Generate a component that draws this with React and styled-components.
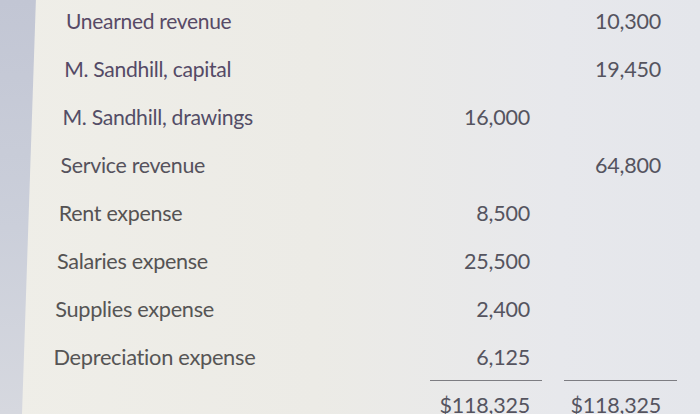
import styled, { createGlobalStyle } from 'styled-components';

const GlobalStyle = createGlobalStyle`
  html, body {
    margin: 0;
    padding: 0;
    width: 700px;
    height: 414px;
    overflow: hidden;
    background: linear-gradient(180deg, #c2c6d4 0%, #cbcfda 55%, #d6d8df 100%);
    font-family: Lato, "Open Sans", sans-serif;
  }
`;

const Screen = styled.div`
  width: 700px;
  height: 414px;
  overflow: hidden;
`;

// the photographed page, its left edge leans a little
const Sheet = styled.div`
  height: calc(100% + 3px);
  clip-path: polygon(36px 0, 100% 0, 100% 100%, 22px 100%);
  background: linear-gradient(90deg, #efeee8 0%, #ecebe6 45%, #e7e8ec 80%, #e4e6eb 100%);
  margin-top: -3px;
`;

const Table = styled.div`
  display: grid;
  grid-template-columns: 1fr 112px 113px;
  column-gap: 22px;
  padding-right: 23px;
`;

const Label = styled.div`
  height: 48px;
  line-height: 48px;
  font-size: ${p => 21 + p.$row * 0.12}px;
  color: ${p => p.$tint || '#554f5e'};
  white-space: nowrap;
  padding-left: ${p => 66 - p.$row * 1.8}px;
  letter-spacing: -0.3px;
`;

const Amount = styled.div`
  height: 48px;
  line-height: 48px;
  font-size: 21.5px;
  color: #55545f;
  text-align: right;
  padding-right: ${p => (p.$credit ? 16 : 12)}px;
  border-top: ${p => (p.$total ? '1px solid #7d7d82' : 'none')};
  margin-top: ${p => (p.$total ? '-1px' : '0')};
  letter-spacing: -0.2px;
`;

const rows = [
  ['Unearned revenue', '', '10,300', '#574a66'],
  ['M. Sandhill, capital', '', '19,450', '#544a66'],
  ['M. Sandhill, drawings', '16,000', '', '#534d66'],
  ['Service revenue', '', '64,800', '#55525c'],
  ['Rent expense', '8,500', '', '#555353'],
  ['Salaries expense', '25,500', '', '#555353'],
  ['Supplies expense', '2,400', '', '#565555'],
  ['Depreciation expense', '6,125', '', '#565555'],
];

export default function App() {
  return (
    <Screen>
      <GlobalStyle />
      <Sheet>
        <Table>
          {rows.map(([name, debit, credit, tint], i) => (
            <>
              <Label key={name} $row={i} $tint={tint}>{name}</Label>
              <Amount>{debit}</Amount>
              <Amount $credit>{credit}</Amount>
            </>
          ))}
          <Label $row={8} />
          <Amount $total>$118,325</Amount>
          <Amount $total $credit>$118,325</Amount>
        </Table>
      </Sheet>
    </Screen>
  );
}
